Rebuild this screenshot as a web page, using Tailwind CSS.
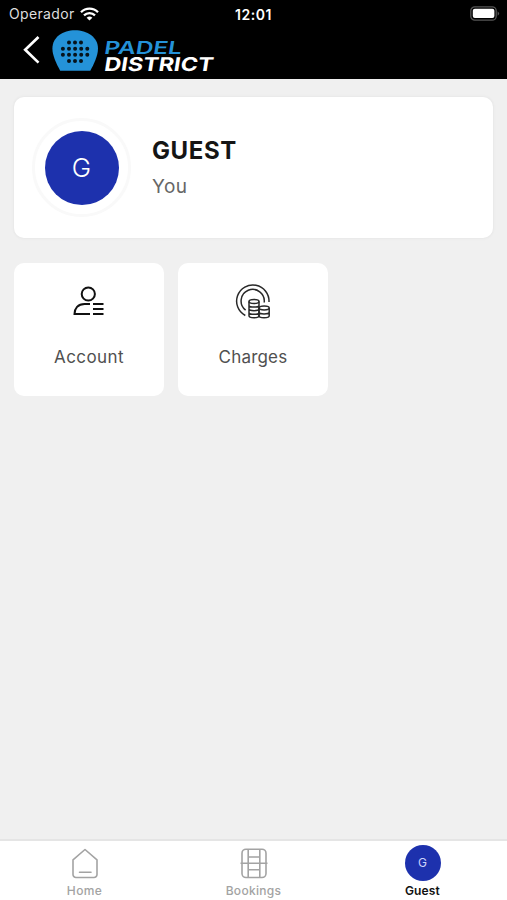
<!DOCTYPE html>
<html lang="en">
<head>
<meta charset="utf-8">
<meta name="viewport" content="width=device-width, initial-scale=1">
<title>Padel District</title>
<script src="https://cdn.jsdelivr.net/npm/@tailwindcss/browser@4"></script>
</head>
<body class="font-['Inter',sans-serif]">
<div class="flex h-[900px] w-[507px] flex-col overflow-hidden bg-[#f0f0f0]">
  <header class="flex h-[79px] shrink-0 flex-col bg-black text-white">
    <div class="grid h-7 grid-cols-3 items-center pr-[7px] pl-[9px]">
      <div class="flex items-center gap-[5px] text-[14px] leading-7 tracking-[0.35px] text-[#dedede]">
        <span>Operador</span>
        <svg class="h-[14px] w-[19px]" viewBox="0 0 19 14" fill="none" stroke="#fff" stroke-width="2.3"><path d="M1 5.2a12 12 0 0 1 17 0M4 8.4a7.8 7.8 0 0 1 11 0"/><path d="M9.5 13.6 6.6 10.8a4.2 4.2 0 0 1 5.8 0z" fill="#fff" stroke="none"/></svg>
      </div>
      <div class="pr-[2px] text-center text-[14px] font-semibold tracking-[0.5px]">12:01</div>
      <svg class="h-[15px] w-[30px] -translate-y-px justify-self-end" viewBox="0 0 30 15"><rect x=".8" y=".8" width="25.4" height="13.4" rx="4" fill="none" stroke="#555" stroke-width="1.3"/><rect x="2.8" y="2.7" width="21.6" height="9.4" rx="2" fill="#fff"/><path d="M27.6 5.2q3 2.3 0 4.6z" fill="#555"/></svg>
    </div>
    <div class="flex items-start pt-[2px] pl-[22px]">
      <svg class="mt-[5px] h-[30px] w-[19px]" viewBox="0 0 19 30" fill="none" stroke="#fff" stroke-width="2.7"><path d="M16.5 2 3.2 14.8 16.5 27.6"/></svg>
      <svg class="ml-[11px] h-[48px] w-[175px]" viewBox="52 30 175 48">
        <path d="M75 30.2C63 30.2 52.4 37 52.4 48.5C52.4 55.5 56.5 64 60.2 70.7H90.3C94 64 98 55.5 98 48.5C98 37 87 30.2 75 30.2Z" fill="#2492d8"/>
        <g stroke="#07131b" stroke-width="4" stroke-linecap="round" fill="none">
          <path d="M69 42.6h13" stroke-dasharray="0 6"/><path d="M62.9 48.7h25" stroke-dasharray="0 6.1"/><path d="M62.9 54.8h25" stroke-dasharray="0 6.1"/><path d="M69 60.9h13" stroke-dasharray="0 6"/>
        </g>
        <g font-family="Inter, sans-serif">
          <text transform="translate(103.5 54.3) skewX(-9)" font-size="18" font-weight="600" textLength="77.5" lengthAdjust="spacingAndGlyphs" fill="#2492d8">PADEL</text>
          <text transform="translate(103.5 70.8) skewX(-9)" font-size="19" font-weight="700" textLength="109" lengthAdjust="spacingAndGlyphs" fill="#fff">DISTRICT</text>
        </g>
      </svg>
    </div>
  </header>

  <main class="flex-1 px-[14px] pt-[18px]">
    <section class="flex h-[141px] items-center rounded-[10px] bg-white pl-[18px] shadow-[0_0_2px_1px_#e8e8e8]">
      <div class="flex size-[99px] items-center justify-center rounded-full border-[3px] border-[#f9f9f9]">
        <div class="flex size-[74px] items-center justify-center rounded-full bg-[#1d31ad] text-[26px] font-light text-white">G</div>
      </div>
      <div class="ml-[21px]">
        <h1 class="text-[24px] leading-[30px] font-bold tracking-[0.6px] text-[#151515]">GUEST</h1>
        <p class="mt-[7px] text-[19px] leading-[27px] tracking-[0.5px] text-[#666]">You</p>
      </div>
    </section>

    <div class="mt-[25px] flex gap-[14px]">
      <a class="flex h-[133px] w-[150px] flex-col items-center rounded-[10px] bg-white pt-[20px]">
        <svg class="h-[36px] w-[36px]" viewBox="71 283 36 36" fill="none" stroke="#111" stroke-width="2"><circle cx="88.3" cy="294" r="6.6"/><path d="M90 304h-5.5C78 304 74.5 308.5 74.5 314H90M93 304h10.5M93 309h10.5M93 314h10.5"/></svg>
        <span class="mt-[26px] text-[17px] leading-[24px] tracking-[0.4px] text-[#505050]">Account</span>
      </a>
      <a class="flex h-[133px] w-[150px] flex-col items-center rounded-[10px] bg-white pt-[20px]">
        <svg class="h-[36px] w-[36px]" viewBox="235 282 36 36" fill="none" stroke="#292929" stroke-width="1.5"><path d="M245.3 314.5A16.2 16.2 0 1 1 269 301M245.6 309.2A11.6 11.6 0 1 1 264.2 301.5"/><ellipse cx="254" cy="300.5" rx="5" ry="2"/><path d="M249 300.5v14.3c0 2.6 10 2.6 10 0v-14.3M249 304.2c0 2.5 10 2.5 10 0M249 307.8c0 2.5 10 2.5 10 0M249 311.4c0 2.5 10 2.5 10 0"/><ellipse cx="264.2" cy="307" rx="5" ry="1.9"/><path d="M259 307v7.8c0 2.6 10.2 2.6 10.2 0V307M259 311c0 2.5 10.2 2.5 10.2 0"/></svg>
        <span class="mt-[26px] text-[17px] leading-[24px] tracking-[0.2px] text-[#505050]">Charges</span>
      </a>
    </div>
  </main>

  <nav class="grid h-[61px] shrink-0 grid-cols-3 border-t-2 border-[#e5e5e5] bg-white text-[12px] leading-[16px] font-medium text-[#a3a3a3]">
    <a class="flex flex-col items-center pt-[7px]">
      <svg class="h-[31px] w-[28px]" viewBox="0 0 28 31" fill="none" stroke="#a3a3a3" stroke-width="1.6" stroke-linejoin="round" stroke-linecap="round"><path d="M2 11.8 14 1.5 26 11.8V26.5a3 3 0 0 1-3 3H5a3 3 0 0 1-3-3zM8.5 24.3h11.5"/></svg>
      <span class="mt-[4px] tracking-[0.35px]">Home</span>
    </a>
    <a class="flex flex-col items-center pt-[7px]">
      <svg class="h-[31px] w-[28px]" viewBox="0 0 28 31" fill="none" stroke="#a3a3a3" stroke-width="1.6"><rect x="2" y="1.2" width="24" height="28.3" rx="4"/><path d="M8.2 1v28.5M19.8 1v28.5M.5 15.3h27M8.2 9h11.6M8.2 21.8h11.6"/></svg>
      <span class="mt-[4px] tracking-[0.3px]">Bookings</span>
    </a>
    <a class="flex flex-col items-center pt-[4px]">
      <div class="flex size-[36px] items-center justify-center rounded-full bg-[#1d31ad] text-[12px] font-normal text-[#cbd3fa]">G</div>
      <span class="mt-[2px] font-semibold tracking-[0.15px] text-[#111]">Guest</span>
    </a>
  </nav>
</div>
</body>
</html>
